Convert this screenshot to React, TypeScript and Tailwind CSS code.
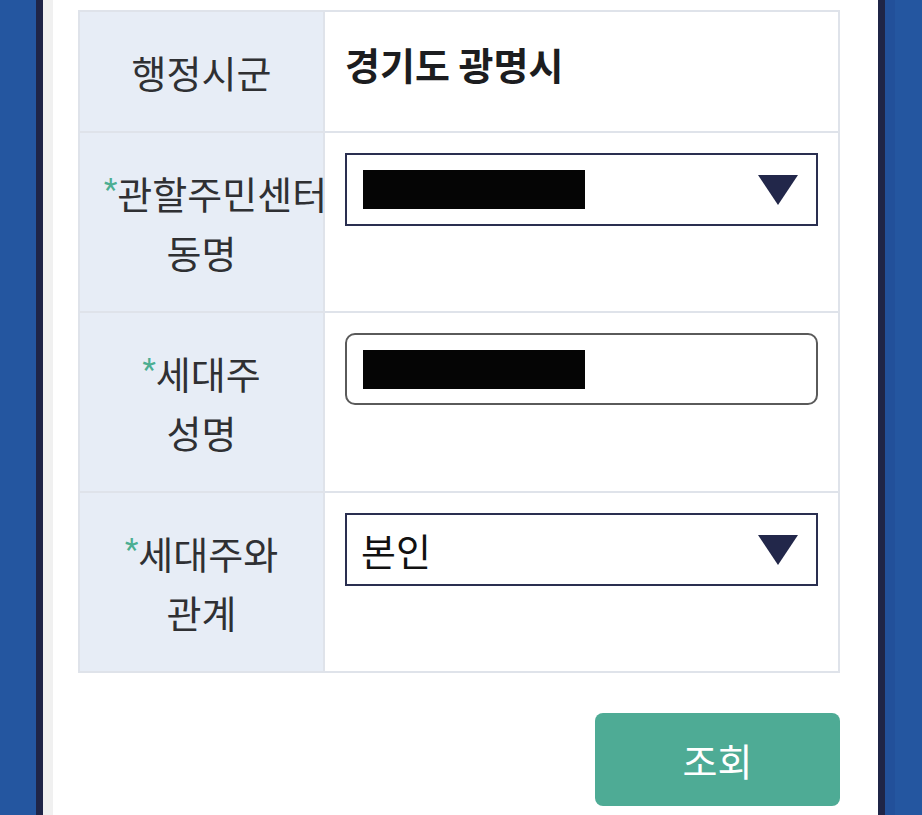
import React from 'react';

const FONT = "font-['Noto_Sans_CJK_KR','Roboto',sans-serif]";

function Req({ children }: { children: React.ReactNode }) {
  return (
    <span className="whitespace-nowrap">
      <span className="font-['Roboto'] text-[31px] leading-[0px] align-[9px] text-[#4cae92]">*</span>
      {children}
    </span>
  );
}

function Caret() {
  return (
    <svg width="40" height="30" viewBox="0 0 40 30" className="shrink-0">
      <polygon points="0,0 40,0 20,30" fill="#22274a" />
    </svg>
  );
}

function Redacted() {
  return <div className="h-[39px] w-[222px] bg-[#050505]" />;
}

function Row({ label, children, last }: { label: React.ReactNode; children: React.ReactNode; last?: boolean }) {
  return (
    <div className={`flex ${last ? '' : 'border-b-2 border-[#dfe3ea]'}`}>
      <div className="w-[245px] shrink-0 border-r-2 border-[#dfe3ea] bg-[#e7edf6] px-[24px] py-[30px] text-center text-[38px] leading-[59px] text-[#2f3033] break-keep">
        {label}
      </div>
      <div className="flex-1 bg-white px-[20px] pt-[20px]">{children}</div>
    </div>
  );
}

export default function App() {
  return (
    <div className={`${FONT} min-h-screen bg-[#2456a0] pl-[36px]`}>
      <div className="flex min-h-screen">
        <div className="flex w-[849px] border-x-[7px] border-[#1f2547] bg-white">
          <div className="w-[10px] shrink-0 bg-[#f0f0f0]" />
          <div className="flex-1 pl-[25px] pt-[10px]">
            <div className="w-[762px] border-2 border-[#dfe3ea]">
              <Row label="행정시군">
                <div className="pt-[3px] text-[38px] font-bold leading-[58px] text-[#1c1d20]">경기도 광명시</div>
              </Row>
              <Row
                label={
                  <>
                    <Req>관할주민센터</Req> 동명
                  </>
                }
              >
                <div className="flex h-[73px] items-center justify-between border-2 border-[#2a2f50] pl-[16px] pr-[18px]">
                  <Redacted />
                  <Caret />
                </div>
              </Row>
              <Row
                label={
                  <>
                    <Req>세대주</Req> 성명
                  </>
                }
              >
                <div className="flex h-[72px] items-center rounded-[10px] border-2 border-[#5a5a5a] pl-[16px]">
                  <Redacted />
                </div>
              </Row>
              <Row
                last
                label={
                  <>
                    <Req>세대주와</Req> 관계
                  </>
                }
              >
                <div className="flex h-[73px] items-center justify-between border-2 border-[#2a2f50] pl-[14px] pr-[18px] text-[38px] text-[#111]">
                  <span>본인</span>
                  <Caret />
                </div>
              </Row>
            </div>
            <div className="flex w-[762px] justify-end pt-[40px]">
              <button className="flex h-[93px] w-[245px] items-center justify-center rounded-[8px] bg-[#4eab95] text-[38px] text-white">
                조회
              </button>
            </div>
          </div>
        </div>
        <div className="w-[10px] bg-[#22509a]" />
      </div>
    </div>
  );
}
